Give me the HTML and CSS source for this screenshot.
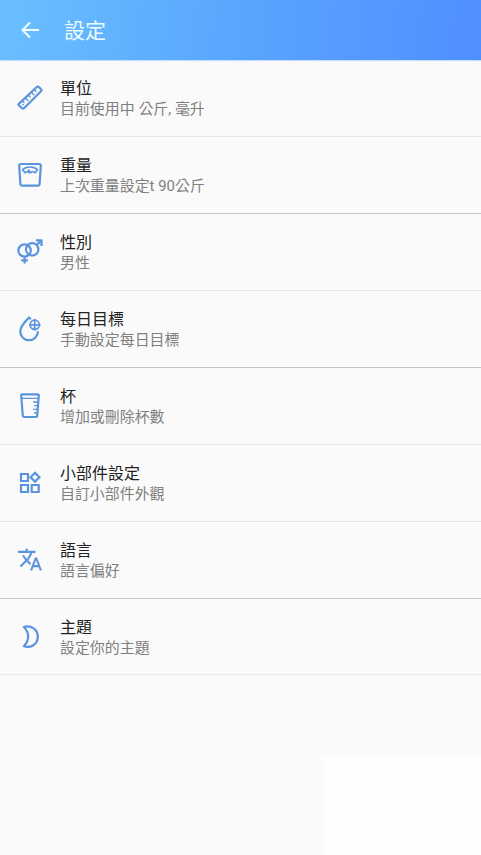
FILE: index.html
```html
<!DOCTYPE html>
<html lang="zh-Hant">
<head>
<meta charset="utf-8">
<title>設定</title>
<link rel="stylesheet" href="styles.css">
</head>
<body>
<header class="bar">
  <svg class="back" viewBox="0 0 24 24"><path d="M21 12H4.5M12 4.5 4.5 12l7.5 7.5"/></svg>
  <h1 class="heading">設定</h1>
</header>
<main class="list">
  <div class="row">
    <svg class="icon" viewBox="0 0 30 30"><path d="M3.8 20.9 21.8 4Q22.8 3 23.8 4L26 6.3Q27 7.3 26 8.3L9 25.2Q8 26.2 7 25.2L3.8 22.3Q3 21.6 3.8 20.9Z"/><path class="thin" d="m7.5 18 2 2M10.5 15.2l2.8 2.8M13.5 12.3l2 2M16.5 9.5l2.8 2.8M19.5 6.8l2 2"/><circle class="dot" cx="8" cy="21.6" r=".9"/></svg>
    <div class="text"><div class="title">單位</div><div class="sub">目前使用中 公斤, 毫升</div></div>
  </div>
  <div class="row dark">
    <svg class="icon" viewBox="0 0 30 30"><path d="M6 4H24Q26 4 25.8 6L24.6 24Q24.5 25.7 22.8 25.7H7.2Q5.5 25.7 5.4 24L4.2 6Q4 4 6 4Z"/><path class="mid" d="M7.5 9.8Q10 7 15 7T22.5 9.8L20 12.8Q18.8 11.6 17.3 11.5Q15 14 12.8 11.5Q11.2 11.6 10 12.8ZM15 12.5l-1.6-3"/></svg>
    <div class="text"><div class="title">重量</div><div class="sub">上次重量設定t 90公斤</div></div>
  </div>
  <div class="row">
    <svg class="icon" viewBox="0 0 30 30"><circle cx="9.6" cy="13.5" r="6.2"/><circle cx="17.2" cy="12.4" r="6.2"/><path d="M21.6 8.1 26 3.8M21 3.4h5.5V9M9.6 19.5v7M6.3 23.4h6.6"/></svg>
    <div class="text"><div class="title">性別</div><div class="sub">男性</div></div>
  </div>
  <div class="row dark">
    <svg class="icon" viewBox="0 0 30 30"><path d="M16 5 14 3.6C9.5 8 5.2 12.8 5.2 17.6A8.8 8.8 0 0 0 14 26.2C19 26.2 22.8 22.5 23 17.3"/><circle class="mid" cx="19.7" cy="10.8" r="4.6"/><path class="mid" d="M19.7 5v11.6M14 10.8h11.5"/></svg>
    <div class="text"><div class="title">每日目標</div><div class="sub">手動設定每日目標</div></div>
  </div>
  <div class="row">
    <svg class="icon" viewBox="0 0 30 30"><path d="M7.3 3.3H22.7Q24 3.3 23.8 4.6L22.2 24.6Q22.1 26 20.7 26H9.3Q7.9 26 7.8 24.6L6.2 4.6Q6 3.3 7.3 3.3Z"/><path class="thin" d="M6.5 7.3h17M18 11h4.5M19 14.6h3.5M18 18.4h4.5M19 22h3.5"/></svg>
    <div class="text"><div class="title">杯</div><div class="sub">增加或刪除杯數</div></div>
  </div>
  <div class="row">
    <svg class="icon sharp" viewBox="0 0 30 30"><path d="M6 6h7v7H6zM6 17h7v7H6zM16.7 17h7v7h-7zM20 4.8 24.4 9.2 20 13.6 15.6 9.2Z"/></svg>
    <div class="text"><div class="title">小部件設定</div><div class="sub">自訂小部件外觀</div></div>
  </div>
  <div class="row dark">
    <svg class="icon solid" viewBox="0 0 30 30"><path transform="translate(1.9 1.5) scale(1.09)" d="M12.87 15.07l-2.54-2.51.03-.03c1.74-1.94 2.98-4.17 3.71-6.53H17V4h-7V2H8v2H1v1.99h11.17C11.5 7.92 10.44 9.75 9 11.35 8.07 10.32 7.3 9.19 6.69 8h-2c.73 1.63 1.73 3.17 2.98 4.56l-5.09 5.02L4 19l5-5 3.11 3.11.76-2.04zM18.5 10h-2L12 22h2l1.12-3h4.75L21 22h2l-4.5-12zm-2.62 7l1.62-4.33L19.12 17h-3.24z"/></svg>
    <div class="text"><div class="title">語言</div><div class="sub">語言偏好</div></div>
  </div>
  <div class="row last">
    <svg class="icon" viewBox="0 0 30 30"><path d="M8.8 5C15.5 2.7 22.8 7 22.8 14.7S15.5 26.5 8.8 24.3C14.6 19 14.6 10.2 8.8 5Z"/></svg>
    <div class="text"><div class="title">主題</div><div class="sub">設定你的主題</div></div>
  </div>
</main>
<div class="glow"></div>
</body>
</html>
```
FILE: styles.css
```css
* { box-sizing: border-box; }
body {
  margin: 0;
  height: 855px;
  display: flex;
  flex-direction: column;
  overflow: hidden;
  background: #fafafa;
  font-family: Roboto, "Noto Sans CJK TC", sans-serif;
}
.bar {
  height: 60px;
  flex: none;
  display: flex;
  align-items: center;
  padding-left: 18px;
  background: linear-gradient(97deg, #6abfff, #5aa5ff 50%, #4f8fff);
  box-shadow: 0 1px 1px #c5defa;
}
.back {
  width: 24px;
  height: 24px;
  margin-right: 22px;
  fill: none;
  stroke: #f2ffff;
  stroke-width: 2.1;
}
.heading {
  margin: 0;
  padding-top: 2px;
  font-size: 21px;
  line-height: 30px;
  font-weight: 400;
  color: #ecfcff;
}
.row {
  height: 77px;
  display: flex;
  align-items: center;
  padding-left: 15px;
  border-bottom: 1px solid #e6e6e6;
}
.row.dark { border-bottom-color: #c4c4c4; }
.row.last {
  height: 76px;
  padding-top: 1px;
  border-bottom-color: #e9e9e9;
}
.icon {
  width: 30px;
  height: 30px;
  margin-right: 15px;
  fill: none;
  stroke: #5a93de;
  stroke-width: 2.2;
  stroke-linejoin: round;
}
.sharp { stroke-linejoin: miter; }
.solid { fill: #5a93de; stroke: none; }
.thin { stroke-width: 1.3; }
.mid { stroke-width: 1.7; }
.dot { fill: #5a93de; stroke: none; }
.text { padding-top: 2px; }
.title {
  font-size: 16px;
  line-height: 21px;
  color: #222;
}
.sub {
  font-size: 14.95px;
  line-height: 21px;
  color: #808080;
}
.glow {
  flex: none;
  width: 158px;
  height: 99px;
  margin: 81px 0 0 auto;
  background: #fdfdfd;
  box-shadow: 0 0 4px #fcfcfc;
}
```
